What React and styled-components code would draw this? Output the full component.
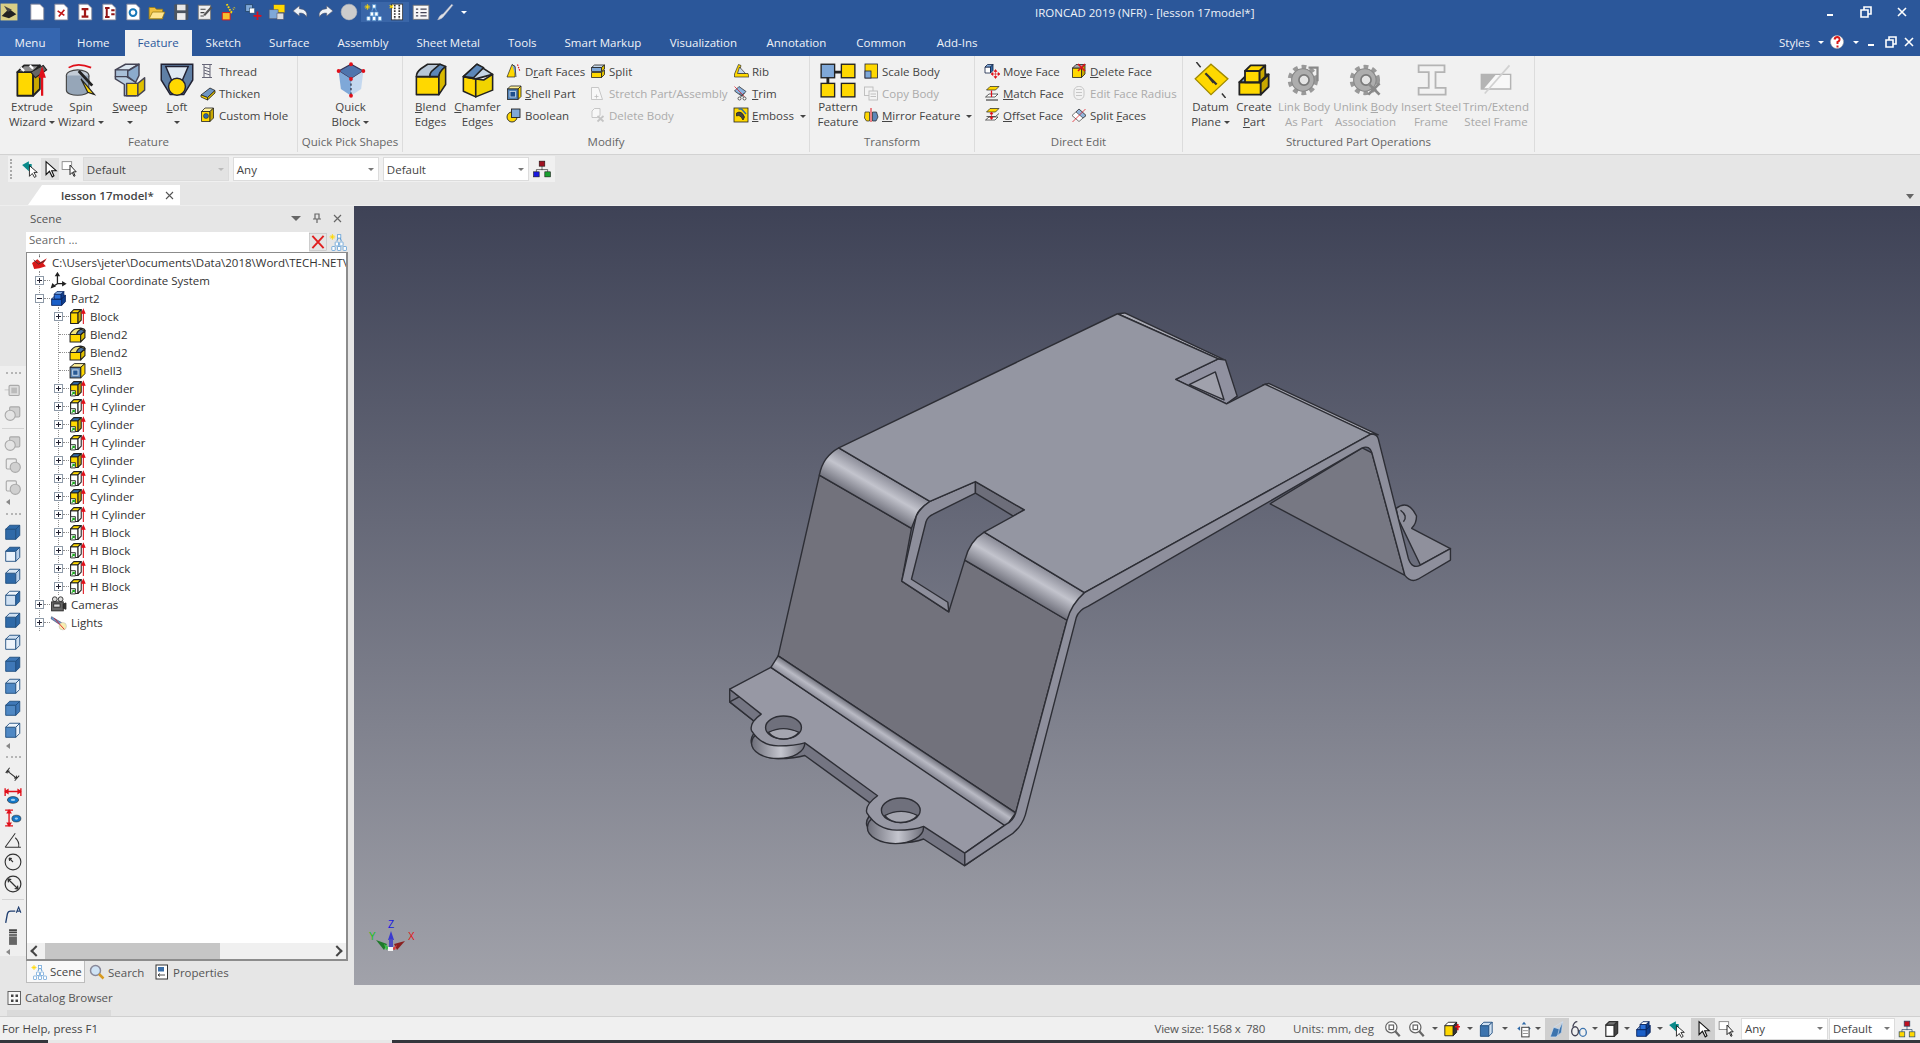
import React from "react";
import styled, { createGlobalStyle } from "styled-components";

const Y = "#ffd800";
const B = "#7fa8d8";
const DB = "#2f6aa8";
const K = "#222";
const R = "#e0101a";

const GlobalStyle = createGlobalStyle`
  html, body { margin: 0; padding: 0; background: #e6e6e6; overflow: hidden; }
  body { font-family: "Open Sans", "Liberation Sans", sans-serif; font-size: 11.5px; color: #444; }
  * { box-sizing: border-box; }
`;

// cube drawn in a 32 unit box
const Cube = ({ x = 4, y = 8, w = 16, h = 18, d = 7, f = Y, t = B, s = "#c9a800", k = K, sw = 1.6 }) => (
  <g stroke={k} strokeWidth={sw} strokeLinejoin="round">
    <path d={`M${x} ${y}h${w}v${h}h-${w}z`} fill={f} />
    <path d={`M${x} ${y}l${d} -${d}h${w}l-${d} ${d}z`} fill={t} />
    <path d={`M${x + w} ${y}l${d} -${d}v${h}l-${d} ${d}z`} fill={s} />
  </g>
);
const Arrow = ({ x = 28 }) => (
  <path d={`M${x} 30V8M${x - 3} 10l3 -7 3 7z`} stroke={R} strokeWidth="2" fill={R} />
);
const Gear = ({ mark }) => (
  <g>
    <circle cx="15" cy="16" r="11" fill="none" stroke="#8a8a8a" strokeWidth="5" strokeDasharray="4 3.2" />
    <circle cx="15" cy="16" r="10" fill="#a2a2a2" stroke="#777" />
    <circle cx="16" cy="16" r="4.5" fill="#e4e4e4" stroke="#666" strokeWidth="1.5" />
    {mark}
  </g>
);
const Feat = ({ top = Y, f = Y, s = "#c9a800", green }) => (
  <g>
    <Cube x={3} y={9} w={14} h={20} d={6} f={f} t={top} s={s} sw={2} />
    {green && <path d="M3 20h9v10H3z" fill="#fff" stroke={K} strokeWidth="1.6" />}
    {green && <path d="M5 28l5 -5M6 23h4v4" stroke="#18a818" strokeWidth="2" fill="none" />}
    <Arrow x={27} />
  </g>
);
const Ghost = ({ flip }) => (
  <g fill="#d0d0d0" stroke="#aaa" strokeWidth="2">
    <rect x={flip ? 4 : 10} y="5" width="18" height="18" rx="2" fill={flip ? "#eee" : "#d0d0d0"} />
    <circle cx={flip ? 20 : 11} cy="20" r="9" fill={flip ? "#d0d0d0" : "#e4e4e4"} />
  </g>
);
const BlueBox = ({ f = DB, t = B, s = "#4f86c0" }) => (
  <Cube x={3} y={11} w={18} h={18} d={7} f={f} t={t} s={s} k="#204f80" />
);
const BlueShell = () => (
  <g stroke={K} strokeWidth="1.6">
    <path d="M3 8l6-6h21l-6 6z" fill="#fff199" />
    <path d="M24 8l6-6v21l-6 6z" fill={Y} />
    <rect x="3" y="8" width="21" height="21" fill="#4f80b5" />
    <rect x="8" y="13" width="11" height="11" fill="#1e4f8c" stroke="#cde" />
  </g>
);
const Sheet = ({ children }) => (
  <g>
    <path d="M5 2h16l7 7v21H5z" fill="#fff" stroke="#889" strokeWidth="1.5" />
    {children}
  </g>
);

const glyphs = {
  extrude: (
    <g>
      <Cube x={3} y={9} w={14} h={21} d={6} t="#8e8e8e" />
      <path d="M6 5l3 3M14 3l3 3" stroke="#fff" strokeWidth="2" />
      <path d="M15 9L26 3l3 4-10 7z" fill="#666" stroke={K} />
      <path d="M25 30V12M23 13l2 -6 2 6z" stroke={R} strokeWidth="2" fill={R} />
    </g>
  ),
  spin: (
    <g>
      <ellipse cx="13" cy="12" rx="10" ry="5" fill="#c3ccd6" stroke="#444" />
      <path d="M3 12v13c0 6 20 6 20 0V12" fill="#96a6b8" stroke="#444" />
      <path d="M16 15l12 14-6-2z" fill={Y} stroke={K} />
      <path d="M14 8l12 13" stroke={K} strokeWidth="2.5" />
      <path d="M5 5q8 -5 20 0" stroke={R} strokeWidth="1.5" fill="none" />
    </g>
  ),
  sweep: (
    <g stroke="#445" strokeWidth="1.3" strokeLinejoin="round">
      <path d="M3 7l9 -5h12l-10 6z" fill="#dbe6f0" />
      <path d="M3 7h11v6H3z" fill="#a9c0d8" />
      <path d="M3 13h10l8 5v12H11V20L3 15z" fill="#b9cde0" />
      <path d="M14 8l10 -6v10l-3 6-7-5z" fill="#8cabcc" />
      <path d="M13 19h10v11H13z" fill={Y} />
      <path d="M23 19l6 -5v11l-6 5z" fill="#e0c000" />
    </g>
  ),
  loft: (
    <g stroke="#223" strokeWidth="1.3">
      <path d="M2 2h28v14l-8 13H10L2 16z" fill="#5f7fa5" />
      <path d="M6 4h20l-6 14h-8z" fill="#dfe9f3" />
      <circle cx="16" cy="22" r="7.5" fill={Y} />
    </g>
  ),
  quick: (
    <g>
      <path d="M5 8l11 -6 11 6-11 7z" fill="#4f74ad" stroke="#335" />
      <path d="M5 8l11 7v15L7 24z" fill={B} />
      <path d="M27 8L16 15v15l9-6z" fill="#c4d8ef" />
      <path d="M16 15v15" stroke="#223" strokeDasharray="2 2" />
      {[[5, 8], [16, 2], [27, 8], [16, 15], [16, 30]].map(([x, y]) => (
        <circle key={x + "" + y} cx={x} cy={y} r="1.7" fill={R} />
      ))}
    </g>
  ),
  blend: (
    <g stroke={K} strokeWidth="1.4" strokeLinejoin="round">
      <path d="M3 13v16h20V13z" fill={Y} />
      <path d="M3 13q0-4 4-7l6-4h11l-5 5q-4 2-4 6z" fill="#b7c6d6" />
      <path d="M15 13h8q0-4 6-9l-5-2-6 5q-3 2-3 6z" fill="#5c87b8" />
      <path d="M23 13q0-4 6-9v16l-6 9z" fill="#d9b900" />
    </g>
  ),
  chamfer: (
    <g stroke={K} strokeWidth="1.4" strokeLinejoin="round">
      <path d="M3 13v13l11 5V15z" fill={Y} />
      <path d="M14 15v16l15-6V11l-8 5z" fill="#f1d400" />
      <path d="M3 13L15 2l14 9-15 4z" fill="#c5d5e5" />
      <path d="M3 13L15 2l6 3-9 9z" fill="#5c87b8" />
    </g>
  ),
  pattern: (
    <g stroke={K} strokeWidth="1.2">
      <path d="M11 9h10M7 13v6" strokeWidth="2.5" />
      <rect x="1" y="2" width="12" height="12" fill={B} />
      <rect x="19" y="2" width="12" height="12" fill={Y} />
      <rect x="1" y="19" width="12" height="12" fill={Y} />
      <rect x="19" y="19" width="12" height="12" fill={Y} />
    </g>
  ),
  datum: (
    <g>
      <path d="M16 2L31 15 16 29 2 15z" fill={Y} stroke="#a08a00" strokeWidth="1.2" />
      <path d="M3 0l26 32" stroke="#333" strokeWidth="1.3" strokeDasharray="6 12" />
      <path d="M11 10l10 10" stroke="#333" strokeWidth="2" />
    </g>
  ),
  create: (
    <g>
      <Cube x={3} y={18} w={19} h={11} d={7} />
      <Cube x={8} y={8} w={13} h={10} d={5} t={Y} />
    </g>
  ),
  link: <Gear mark={<path d="M20 5h8v12" stroke="#777" strokeWidth="2" fill="none" />} />,
  unlink: <Gear mark={<path d="M18 19l10 10M28 19L18 29" stroke="#777" strokeWidth="2.5" />} />,
  steel: <path d="M5 3h23v6H20v14h9v6H5v-6h9V9H5z" fill="#f3f3f3" stroke="#aaa" strokeWidth="1.6" />,
  trimsteel: (
    <g>
      <path d="M3 11h26v13H3z" fill="#fafafa" stroke="#aaa" strokeWidth="1.3" />
      <path d="M3 11h13L5 24H3z" fill="#aaa" />
      <path d="M6 28L28 3" stroke="#ccc" strokeWidth="1.5" />
    </g>
  ),
  thread: (
    <g stroke="#667" strokeWidth="2" fill="#cfd9e5">
      <path d="M4 3h20M4 29h20M8 3v26M20 3v26" />
      <path d="M8 8l12 4M8 14l12 4M8 20l12 4" />
    </g>
  ),
  thicken: (
    <g stroke={K} strokeWidth="1.6" strokeLinejoin="round">
      <path d="M2 20L20 6l10 5-15 14z" fill="#6d95c4" />
      <path d="M2 20l13 5v5L2 24z" fill={Y} />
      <path d="M15 25l15-14v5L15 30z" fill="#d9b900" />
    </g>
  ),
  hole: (
    <g>
      <Cube x={3} y={9} w={17} h={20} d={7} t="#fff2a0" />
      <circle cx="12" cy="18" r="5" fill={DB} stroke={K} />
    </g>
  ),
  draft: (
    <g stroke={K} strokeWidth="1.4">
      <path d="M2 28L12 3l6 4v21z" fill={Y} />
      <path d="M12 3l6 4 2 21" fill={B} />
      <path d="M23 3l5 14" stroke={R} strokeWidth="2.4" strokeDasharray="3 2" />
    </g>
  ),
  shell: <BlueShell />,
  boolean: (
    <g stroke={K} strokeWidth="1.8">
      <circle cx="12" cy="20" r="10" fill={Y} />
      <rect x="11" y="4" width="17" height="17" fill={B} />
    </g>
  ),
  split: (
    <g stroke={K} strokeWidth="1.6" strokeLinejoin="round">
      <path d="M3 9l6-5h20l-6 5z" fill="#c8d9ea" />
      <path d="M3 9h20v8H3z" fill={B} />
      <path d="M3 19h20v10H3z" fill={Y} />
      <path d="M23 9l6-5v8l-6 5zM23 19l6-5v9l-6 6z" fill="#e0c000" />
    </g>
  ),
  stretch: (
    <g stroke="#bbb" strokeWidth="1.6" fill="#f7f7f7">
      <path d="M3 29V5h14l8 24z" />
      <path d="M9 23h8M13 19v8" />
    </g>
  ),
  deletebody: (
    <g stroke="#bbb" strokeWidth="1.6" fill="#f7f7f7">
      <path d="M4 8l5-5h11v14l-5 4H4z" />
      <path d="M15 18l12 11M27 18L15 29" strokeWidth="3.5" stroke="#c4c4c4" />
    </g>
  ),
  rib: (
    <g stroke={K} strokeWidth="1.3" strokeLinejoin="round">
      <path d="M3 28V22L11 3l5 2-4 16h18l2 7z" fill={Y} />
      <path d="M9 21l4-13 12 13z" fill="#c7d6e8" />
    </g>
  ),
  trim: (
    <g stroke={K} strokeWidth="1.4">
      <path d="M3 12L12 3l14 10-9 9z" fill="#8cb2dd" />
      <path d="M3 3l20 20" stroke={R} strokeWidth="1.4" />
      <circle cx="13" cy="27" r="3" fill="#fff" />
      <circle cx="23" cy="27" r="3" fill="#fff" />
      <path d="M15 24l8-8M21 24l-8-8" />
    </g>
  ),
  emboss: (
    <g stroke={K} strokeWidth="1.6">
      <rect x="2" y="2" width="28" height="28" fill={Y} />
      <path d="M7 12q10-6 16 8l-3 6q-6-12-13-8z" fill="#444" />
      <path d="M11 4h6l9 10" stroke={DB} strokeWidth="3" fill="none" />
    </g>
  ),
  scale: (
    <g stroke="#223" strokeWidth="1.6">
      <rect x="4" y="2" width="25" height="28" fill={Y} />
      <rect x="4" y="16" width="12" height="14" fill={B} />
    </g>
  ),
  copy: (
    <g stroke="#bbb" strokeWidth="1.8" fill="#f3f3f3">
      <rect x="3" y="4" width="17" height="17" />
      <rect x="12" y="12" width="17" height="18" />
      <path d="M15 18h11M15 23h11" />
    </g>
  ),
  mirror: (
    <g stroke={K} strokeWidth="1.4">
      <path d="M4 10h9v18H7L3 22z" fill={Y} />
      <path d="M19 10h8l3 10-4 8h-7z" fill="#5c87b8" />
      <path d="M16 2v28" stroke={R} strokeWidth="2" />
    </g>
  ),
  move: (
    <g>
      <Cube x={2} y={8} w={11} h={12} d={5} f="#fff" t={B} s={DB} k="#124" />
      <path d="M23 14v16M15 22h16M23 13l-3 4h6zM23 31l-3-4h6zM14 22l4-3v6zM32 22l-4-3v6z" stroke={R} fill={R} strokeWidth="1.2" />
    </g>
  ),
  match: (
    <g stroke={K} strokeWidth="1.4">
      <path d="M5 10L12 3h18l-7 7z" fill={Y} />
      <path d="M3 24l7-6h18l-6 6z" fill="#fff" />
      <path d="M4 30h24" strokeWidth="2" />
      <path d="M15 11v13" stroke={R} strokeWidth="2.5" />
    </g>
  ),
  offset: (
    <g stroke={K} strokeWidth="1.4">
      <path d="M5 10L12 3h18l-7 7z" fill={Y} />
      <path d="M5 19h18l7-6" fill="none" />
      <path d="M3 26l7-6h18l-6 6z" fill="#fff" />
      <path d="M15 11v13M12 14l3-4 3 4zM12 21l3 4 3-4z" stroke={R} fill={R} />
    </g>
  ),
  deleteface: (
    <g>
      <Cube x={3} y={10} w={18} h={19} d={7} t="#a8a8a8" />
      <path d="M14 2l14 14M28 2L14 16" stroke={R} strokeWidth="3" />
    </g>
  ),
  radius: (
    <g stroke="#bbb" strokeWidth="1.6" fill="#f2f2f2">
      <rect x="6" y="3" width="20" height="26" rx="9" />
      <path d="M10 9h12M10 15h12M10 21h12" />
    </g>
  ),
  splitfaces: (
    <g stroke={K} strokeWidth="1.2">
      <path d="M2 17L16 4l14 13-14 12z" fill="#fff" />
      <path d="M10 10l6-6 14 13-6 5z" fill="#93b5dc" />
      <path d="M3 30L29 4" stroke={R} strokeWidth="1.5" />
    </g>
  ),
  logo: (
    <g>
      <rect x="1" y="1" width="30" height="30" fill="#d9cf86" />
      <path d="M3 23l13-13 13 10-13 7z" fill="#222" />
      <path d="M7 5l14 7-7 4z" fill="#444" />
    </g>
  ),
  newdoc: <Sheet />,
  doc1: (
    <Sheet>
      <path d="M10 14l12 8M22 12L12 24" stroke="#c01818" strokeWidth="3" />
    </Sheet>
  ),
  doc2: (
    <Sheet>
      <path d="M10 11h12M10 24h12M16 11v13" stroke="#a01818" strokeWidth="4" />
    </Sheet>
  ),
  doc3: (
    <Sheet>
      <path d="M9 9h8M12 9v16M9 25h8M20 13h6M20 20h6" stroke="#901515" strokeWidth="3.5" />
    </Sheet>
  ),
  doc4: (
    <Sheet>
      <circle cx="16" cy="17" r="6" fill="none" stroke="#1878b8" strokeWidth="3.5" />
    </Sheet>
  ),
  open: (
    <g stroke="#9a7a10" strokeWidth="1.4">
      <path d="M2 8h10l3 3h11v17H2z" fill="#f0c040" />
      <path d="M2 28l6-12h22l-5 12z" fill="#ffe590" />
    </g>
  ),
  save: (
    <g>
      <rect x="4" y="2" width="25" height="28" rx="2" fill="#4c5560" />
      <rect x="9" y="3" width="15" height="10" fill="#e8e8e8" />
      <rect x="9" y="18" width="15" height="12" fill="#eee" />
    </g>
  ),
  edit: (
    <g>
      <rect x="4" y="4" width="22" height="25" fill="#eee" stroke="#777" strokeWidth="1.5" />
      <path d="M8 11h9M8 17h7M8 23h6" stroke="#444" strokeWidth="2" />
      <path d="M13 21l13-15 3 3-13 14z" fill="#555" />
    </g>
  ),
  paste: (
    <g>
      <path d="M4 17h14v13H4z" fill="#f6c030" stroke={R} strokeWidth="1.6" />
      <path d="M12 2l8 14 6-8" stroke={Y} strokeWidth="3.5" fill="none" strokeDasharray="3 2" />
      <path d="M18 8l9 9" stroke="#2f5aa8" strokeWidth="3" />
    </g>
  ),
  addred: (
    <g>
      <rect x="3" y="3" width="12" height="12" fill={B} stroke="#246" strokeWidth="1.4" />
      <rect x="10" y="9" width="9" height="9" fill="#fff" stroke="#246" />
      <path d="M24 15v15M17 23h14" stroke={R} strokeWidth="3" />
    </g>
  ),
  folderblue: (
    <g stroke="#556" strokeWidth="1">
      <rect x="10" y="3" width="20" height="14" fill={Y} />
      <rect x="2" y="12" width="16" height="16" fill={B} />
      <rect x="16" y="18" width="12" height="11" fill="#ddd" />
    </g>
  ),
  undo: <path d="M13 5L2 14l11 9v-5q9-1 13 7 3-14-13-15z" fill="#eef2f7" stroke="#556" />,
  redo: <path d="M19 5l11 9-11 9v-5q-9-1-13 7-3-14 13-15z" fill="#eef2f7" stroke="#556" />,
  sphere: <circle cx="16" cy="16" r="14" fill="#ccc" stroke="#bbb" />,
  sparkTree: (
    <g>
      <path d="M6 2v10M1 7h10M3 4l6 6M9 4l-6 6" stroke={Y} strokeWidth="1.6" />
      <path d="M18 5l-4 9M18 5l4 9" stroke="#5b9bd5" strokeWidth="2" />
      {[[14, 19], [22, 19], [8, 27], [18, 27], [28, 27]].map(([x, y]) => (
        <rect key={x + "" + y} x={x - 3} y={y - 3} width="6" height="7" rx="1" fill="#fff" stroke="#5b9bd5" strokeWidth="1.4" />
      ))}
      <rect x="15" y="3" width="6" height="6" fill="#fff" stroke="#5b9bd5" strokeWidth="1.4" />
    </g>
  ),
  film: (
    <g>
      <rect x="6" y="2" width="20" height="28" fill="#fff" stroke="#333" strokeWidth="1.4" />
      <path d="M12 3v26M20 3v26" stroke="#333" strokeDasharray="3 2" strokeWidth="3" />
      <path d="M3 4l6 5M9 4l-6 5" stroke={Y} strokeWidth="2" />
    </g>
  ),
  listing: (
    <g fill="none">
      <rect x="2" y="4" width="28" height="25" fill="#f8f8f8" stroke="#777" strokeWidth="1.5" />
      <path d="M7 11h4M15 11h11M7 17h4M15 17h11M7 23h4M15 23h11" stroke="#445" strokeWidth="2.4" />
    </g>
  ),
  brush: <path d="M3 30q3-9 10-11L28 2l2 2-15 18q-3 6-12 8z" fill="#dfe3e8" stroke="#aab" />,
  cursorA: (
    <g>
      <path d="M2 9l12-7v5h5v8h-5v5z" fill="#0a8a8a" />
      <path d="M15 10v19l5-5 4 7 3-2-4-7h6z" fill="#fff" stroke="#111" strokeWidth="1.5" />
    </g>
  ),
  cursor: <path d="M9 3v23l6-6 5 10 3-2-4-9h8z" fill="#fff" stroke="#111" strokeWidth="2" />,
  cursorBox: (
    <g>
      <rect x="2" y="3" width="17" height="14" fill="#fff" stroke="#777" strokeWidth="1.4" />
      <path d="M16 9v17l4-4 3 7 2-1-3-7h5z" fill="#fff" stroke="#111" strokeWidth="1.6" />
    </g>
  ),
  hier: (
    <g stroke="#111" strokeWidth="1">
      <path d="M16 10v8M6 21v-4h20v4" fill="none" />
      <rect x="11" y="2" width="10" height="9" fill="#a01020" />
      <rect x="1" y="21" width="10" height="9" fill="#1818e0" />
      <rect x="21" y="21" width="10" height="9" fill="#18a030" />
    </g>
  ),
  hierY: (
    <g stroke="#246" strokeWidth="1.2">
      <path d="M16 10v8M7 21v-4h18v4" fill="none" />
      <rect x="11" y="2" width="10" height="9" fill="#c01020" />
      <rect x="2" y="21" width="10" height="9" fill={Y} />
      <rect x="20" y="21" width="10" height="9" fill={Y} />
    </g>
  ),
  redX: (
    <g>
      <rect x="1" y="1" width="30" height="30" fill="#e4e4e4" stroke="#bbb" />
      <path d="M6 5l20 22M26 5L6 27" stroke="#e02020" strokeWidth="3.4" />
    </g>
  ),
  root: (
    <g>
      <path d="M2 17l10-7 6 5 12-7-7 10 5 5-12 4L6 28z" fill="#d81818" />
      <path d="M5 11l9 8M27 12l-13 7" stroke="#333" strokeWidth="1.5" />
      <path d="M16 1v5" stroke="#222" strokeDasharray="2 1" strokeWidth="1.5" />
    </g>
  ),
  axes: <path d="M14 2v20M14 22L3 29M14 22h15M14 2l-3 5h6zM3 29l2-6 4 4zM29 22l-5-3v6z" stroke="#222" strokeWidth="2.4" fill="#222" />,
  part: (
    <g>
      <Cube x={3} y={17} w={19} h={12} d={7} f="#1a5fc8" t="#8ab6ee" s="#0e3f90" k="#0a2460" />
      <Cube x={8} y={8} w={13} h={9} d={5} f="#2a6fd8" t="#8ab6ee" s="#0e3f90" k="#0a2460" />
    </g>
  ),
  tblock: <Feat />,
  tcyl: <Feat top={DB} green />,
  thcyl: <Feat f="#fff" s="#fff" green />,
  tblend: (
    <g stroke={K} strokeWidth="2" strokeLinejoin="round">
      <path d="M2 16v14h20V16z" fill={Y} />
      <path d="M22 16l8-7v13l-8 8z" fill="#e0c000" />
      <path d="M2 16q2-7 10-11l10-1q8 1 8 5l-8 7z" fill="#f0e47a" />
      <path d="M14 16q1-6 8-10l8 3-8 7z" fill="#4c76a8" />
    </g>
  ),
  tshell: (
    <g stroke={K} strokeWidth="1.8">
      <path d="M2 10l8-7h20l-8 7z" fill="#fff199" />
      <path d="M22 10l8-7v19l-8 8z" fill={Y} />
      <rect x="2" y="10" width="20" height="20" fill="#5f87b5" />
      <rect x="7" y="15" width="10" height="10" fill="#2a5a95" stroke="#cde" />
    </g>
  ),
  camera: (
    <g stroke="#222" strokeWidth="1.6">
      <circle cx="9" cy="6" r="4.5" fill="#ddd" />
      <circle cx="20" cy="6" r="4.5" fill="#ddd" />
      <rect x="3" y="11" width="22" height="17" fill="#666" />
      <rect x="7" y="15" width="12" height="6" fill="#ddd" />
      <path d="M25 15l5-2v12l-5-2z" fill="#333" />
    </g>
  ),
  light: (
    <g>
      <path d="M3 5l20 12-3 4L2 9z" fill="#6b9bd0" stroke="#335" />
      <circle cx="24" cy="23" r="7" fill="#f6eeb0" stroke="#bbb" />
      <path d="M8 8l19 21" stroke={R} strokeWidth="1.6" />
    </g>
  ),
  magnify: (
    <g>
      <circle cx="13" cy="13" r="10" fill="#cfe3f5" stroke="#889" strokeWidth="3" />
      <path d="M20 20l9 9" stroke="#d89a20" strokeWidth="5" />
    </g>
  ),
  props: (
    <g>
      <rect x="4" y="2" width="23" height="28" fill="#fff" stroke="#333" strokeWidth="2" />
      <rect x="8" y="6" width="12" height="9" fill="#3a6ea8" />
      <path d="M8 22h14M12 19l-4 3 4 3" stroke="#222" strokeWidth="1.6" fill="none" />
    </g>
  ),
  catalog: (
    <g>
      <rect x="2" y="3" width="25" height="26" fill="#f8f8f8" stroke="#555" strokeWidth="1.8" />
      <rect x="8" y="9" width="5" height="5" fill="#444" />
      <rect x="17" y="9" width="5" height="5" fill="#444" />
      <rect x="8" y="19" width="5" height="5" fill="#444" />
      <rect x="17" y="19" width="5" height="5" fill="#444" />
    </g>
  ),
  ghostA: (
    <g>
      <path d="M1 14h8" stroke="#ccc" strokeWidth="2" />
      <rect x="9" y="6" width="18" height="18" rx="2" fill="#ddd" stroke="#aaa" strokeWidth="2" />
      <rect x="13" y="10" width="10" height="10" fill="#bbb" />
    </g>
  ),
  ghostB: <Ghost />,
  ghostC: <Ghost flip />,
  cubeA: <BlueBox f={DB} t={DB} s={DB} />,
  cubeB: <BlueBox f="#eaf2fb" t={DB} s="#b8d0ea" />,
  cubeC: <BlueBox f={DB} t="#d8e6f4" s="#b8d0ea" />,
  cubeD: <BlueBox f="#cfe0f2" t="#eef4fb" s={DB} />,
  cubeE: <BlueBox f={DB} t="#cfe0f2" s={DB} />,
  cubeF: <BlueBox f="#eef4fb" t="#cfe0f2" s="#cfe0f2" />,
  solidA: <BlueBox f="#3f78b8" t="#3f78b8" s="#2a5f9c" />,
  solidB: <BlueBox f="#4f88c4" t="#cfe0f2" s="#eef4fb" />,
  solidC: <BlueBox f="#4f88c4" t="#3f78b8" s="#3f78b8" />,
  solidD: <BlueBox f="#4f88c4" t="#eef4fb" s="#eef4fb" />,
  dimLine: <path d="M5 10l18 14M3 14l7-9M19 28l8-9M5 10l5 1M5 10l1 5M23 24l-5-1M23 24l-1-5" stroke="#333" strokeWidth="1.8" fill="none" />,
  dimH: (
    <g>
      <path d="M2 2v14M30 2v14M2 8h28M2 8l5-3v6zM30 8l-5-3v6z" stroke={R} strokeWidth="2.4" fill={R} />
      <ellipse cx="16" cy="23" rx="10" ry="6" fill="#1478c8" stroke="#222" />
      <ellipse cx="16" cy="23" rx="4" ry="2" fill="#9fd0f0" />
    </g>
  ),
  dimV: (
    <g>
      <path d="M2 2h14M2 30h14M9 2v28M9 2l-3 5h6zM9 30l-3-5h6z" stroke={R} strokeWidth="2.4" fill={R} />
      <ellipse cx="22" cy="17" rx="8" ry="6" fill="#1478c8" stroke="#222" />
      <ellipse cx="22" cy="17" rx="3" ry="2" fill="#9fd0f0" />
    </g>
  ),
  angle: <path d="M2 29h28M2 29L20 4M20 12q8 7 6 17" stroke="#333" strokeWidth="1.8" fill="none" />,
  radiusDim: (
    <g stroke="#333" strokeWidth="2" fill="none">
      <circle cx="16" cy="16" r="14" />
      <path d="M16 16L9 9M9 9l1 5M9 9l5 1" />
    </g>
  ),
  diaDim: (
    <g stroke="#333" strokeWidth="2.2" fill="none">
      <circle cx="16" cy="16" r="14" />
      <path d="M7 7l18 18M7 7l1 6M7 7l6 1M25 25l-1-6M25 25l-6-1" />
    </g>
  ),
  textA: (
    <g>
      <path d="M3 30l3-16q1-5 6-5h8" stroke="#203f70" strokeWidth="2.4" fill="none" />
      <path d="M22 12l4-10 4 10M24 9h4" stroke="#203f70" strokeWidth="2" fill="none" />
    </g>
  ),
  cylGrad: (
    <g>
      <path d="M9 2h14v4H9zM9 7h14v2H9zM9 10h14v2H9zM9 13h14v1H9z" fill="#444" />
      <rect x="9" y="15" width="14" height="15" fill="#666" />
    </g>
  ),
  zoomA: (
    <g stroke="#666" strokeWidth="2.2" fill="#fff">
      <circle cx="13" cy="13" r="10" />
      <rect x="9" y="9" width="8" height="8" />
      <path d="M20 20l8 9" strokeWidth="4" />
    </g>
  ),
  stYellow: (
    <g>
      <Cube x={5} y={10} w={15} h={18} d={6} t="#fff" s="#333" />
      <path d="M28 7v11M23 12h11" stroke={R} strokeWidth="3" />
    </g>
  ),
  stBlue: <Cube x={6} y={10} w={15} h={19} d={6} f="#3d74ae" t="#cfe0f2" s="#cfe0f2" k="#204f80" />,
  stMove: (
    <g>
      <path d="M16 3l-4 5h8zM4 15l5-4v8zM28 15l-5-4v8z" fill="#2f6aa8" />
      <rect x="12" y="13" width="13" height="17" fill="#fff" stroke="#444" strokeWidth="1.8" />
      <path d="M14 19h9M14 24h9" stroke="#444" />
    </g>
  ),
  stEdge: <path d="M4 30l6-17L26 3l-2 19-10 8zM10 13l10 3 6-13M20 16l-3 12" fill="#3d74ae" stroke="#cfe0f2" strokeWidth="1.2" />,
  glasses: (
    <g fill="none" stroke="#445" strokeWidth="2.4">
      <ellipse cx="9" cy="20" rx="6" ry="8" />
      <ellipse cx="23" cy="22" rx="6" ry="7" stroke="#3d74ae" />
      <path d="M5 12q2-9 8-9M14 19h3" />
    </g>
  ),
  stCube: <Cube x={5} y={9} w={15} h={20} d={6} f="#fff" t="#777" s="#444" k="#333" sw={2.2} />,
  stPart: (
    <g>
      <Cube x={3} y={17} w={17} h={12} d={7} f="#1a5fc8" t="#8ab6ee" s="#0e3f90" k="#0a2460" />
      <Cube x={9} y={8} w={11} h={9} d={5} f="#2a6fd8" t="#fff" s="#0e3f90" k="#0a2460" />
    </g>
  ),
  help: (
    <g>
      <circle cx="16" cy="16" r="13" fill="#fff" stroke="#aaa" strokeWidth="2" strokeDasharray="3 2" />
      <path d="M11 11q1-5 6-5 5 1 4 6-1 3-4 4v4M17 23v4" stroke="#d81818" strokeWidth="4" fill="none" />
    </g>
  ),
};

const IconSvg = styled.svg`
  flex: none;
  display: block;
`;
const Icon = ({ name, size = 16 }) => (
  <IconSvg width={size} height={size} viewBox="0 0 32 32">
    {glyphs[name]}
  </IconSvg>
);

const Page = styled.div`
  width: 1920px;
  height: 1043px;
  display: flex;
  flex-direction: column;
  overflow: hidden;
  background: #e6e6e6;
`;
const TitleBar = styled.div`
  height: 28px;
  flex: none;
  background: #2b579a;
  display: flex;
  align-items: center;
  padding: 0 0 4px 0;
  color: #eef2f8;
`;
const Qat = styled.div`
  display: flex;
  align-items: center;
  width: 1035px;
`;
const QatSlot = styled.div`
  width: ${(p) => p.$w || 24}px;
  height: 20px;
  display: flex;
  align-items: center;
  justify-content: center;
  margin-left: ${(p) => p.$ml || 0}px;
  background: ${(p) => (p.$on ? "#3a66a8" : "transparent")};
`;
const Title = styled.div`
  font-size: 11.5px;
`;
const WinButtons = styled.div`
  margin-left: auto;
  display: flex;
  align-items: center;
  gap: 24px;
  padding-right: 12px;
`;
const WinGlyph = styled.svg`
  display: block;
  flex: none;
  width: 12px;
  height: 12px;
  margin-left: ${(p) => p.$ml || 0}px;
`;
const TabBar = styled.div`
  height: 28px;
  flex: none;
  background: #2b579a;
  display: flex;
  align-items: flex-end;
  color: #f0f3f8;
`;
const MenuTab = styled.div`
  width: 60px;
  height: 28px;
  background: #3566b0;
  display: flex;
  align-items: center;
  justify-content: center;
  margin-right: 2px;
`;
const Tab = styled.div`
  height: 26px;
  padding: 0 ${(p) => p.$pad || 14}px 2px;
  display: flex;
  align-items: center;
  background: ${(p) => (p.$active ? "#f1f1f1" : "transparent")};
  color: ${(p) => (p.$active ? "#2b579a" : "inherit")};
`;
const TabRight = styled.div`
  margin-left: auto;
  height: 28px;
  display: flex;
  align-items: center;
  padding-right: 5px;
`;
const HelpSlot = styled.div`
  margin-left: 5px;
`;
const Caret = styled.span`
  display: inline-block;
  flex: none;
  width: 0;
  height: 0;
  border-left: ${(p) => p.$s || 3}px solid transparent;
  border-right: ${(p) => p.$s || 3}px solid transparent;
  border-top: ${(p) => p.$s || 3}px solid ${(p) => p.$c || "#444"};
  margin-left: ${(p) => p.$ml ?? 3}px;
  vertical-align: middle;
`;
const Ribbon = styled.div`
  height: 99px;
  flex: none;
  background: #f1f1f1;
  border-bottom: 1px solid #d2d2d2;
  display: flex;
`;
const Group = styled.div`
  width: ${(p) => p.$w}px;
  height: 96px;
  flex: none;
  padding-top: 4px;
  display: flex;
  flex-direction: column;
  border-right: 1px solid #dcdcdc;
`;
const GroupBody = styled.div`
  height: 74px;
  display: flex;
  padding-left: ${(p) => p.$pl || 0}px;
`;
const GroupLabel = styled.div`
  text-align: center;
  line-height: 15px;
  color: #666;
`;
const Large = styled.div`
  width: ${(p) => p.$w}px;
  flex: none;
  display: flex;
  flex-direction: column;
  align-items: center;
  text-align: center;
  line-height: 15px;
  padding-top: 2px;
  white-space: nowrap;
  color: ${(p) => (p.$off ? "#a8a8a8" : "#444")};
  svg {
    margin-bottom: 1px;
    opacity: ${(p) => (p.$off ? 0.85 : 1)};
  }
`;
const SmallCol = styled.div`
  width: ${(p) => (p.$w ? `${p.$w}px` : "auto")};
  margin-left: ${(p) => p.$ml || 0}px;
  flex: none;
  display: flex;
  flex-direction: column;
`;
const SmallRow = styled.div`
  height: 22px;
  display: flex;
  align-items: center;
  gap: 3px;
  white-space: nowrap;
  color: ${(p) => (p.$off ? "#ababab" : "#444")};
`;
const Key = styled.span`
  text-decoration: underline;
`;
const ToolRow = styled.div`
  height: 30px;
  flex: none;
  padding: 1px 0 0 8px;
  display: flex;
`;
const ToolBar = styled.div`
  width: 547px;
  height: 26px;
  background: #f0f0f0;
  display: flex;
  align-items: center;
`;
const Grip = styled.div`
  width: 2px;
  height: 20px;
  margin: 0 8px 0 2px;
  border-left: 2px dotted #aaa;
`;
const ToolSlot = styled.div`
  width: ${(p) => p.$w || 22}px;
  height: 22px;
  display: flex;
  align-items: center;
  justify-content: center;
  background: ${(p) => (p.$on ? "#e0e0e0" : "transparent")};
`;
const Combo = styled.div`
  width: ${(p) => p.$w}px;
  height: ${(p) => p.$h || 24}px;
  margin-left: ${(p) => p.$ml || 0}px;
  flex: none;
  background: ${(p) => (p.$off ? "#e3e3e3" : "#fff")};
  border: 1px solid #dcdcdc;
  display: flex;
  align-items: center;
  justify-content: space-between;
  padding: 0 4px 0 3px;
`;
const DocStrip = styled.div`
  height: 21px;
  flex: none;
  display: flex;
  align-items: flex-end;
  justify-content: space-between;
  padding: 0 6px 0 28px;
  border-bottom: 1px solid #eee;
`;
const DocTab = styled.div`
  width: 152px;
  height: 20px;
  background: #fff;
  clip-path: polygon(14px 0, 100% 0, 100% 100%, 0 100%);
  display: flex;
  align-items: center;
  padding-left: 33px;
  gap: 11px;
  font-weight: 600;
  color: #444;
`;
const Chevron = styled.div`
  width: 0;
  height: 0;
  margin-bottom: 6px;
  border-left: 4px solid transparent;
  border-right: 4px solid transparent;
  border-top: 5px solid #666;
`;
const Main = styled.div`
  height: 779px;
  flex: none;
  display: flex;
`;
const LeftBar = styled.div`
  width: 26px;
  flex: none;
  padding-top: 160px;
  display: flex;
  flex-direction: column;
  align-items: center;
`;
const LeftItem = styled.div`
  width: 26px;
  height: 22px;
  background: #efefef;
  display: flex;
  align-items: center;
  justify-content: center;
`;
const LeftGap = styled.div`
  width: 26px;
  height: ${(p) => p.$h}px;
  background: #efefef;
  display: flex;
  align-items: center;
  justify-content: ${(p) => (p.$left ? "flex-start" : "center")};
  padding-left: ${(p) => (p.$left ? 6 : 0)}px;
  &::after {
    content: "";
    ${(p) => p.$kind === "grip" && "width: 15px; border-top: 2px dotted #b5b5b5;"}
    ${(p) => p.$kind === "line" && "width: 22px; border-top: 1px solid #d4d4d4;"}
    ${(p) =>
      p.$kind === "arrow" &&
      "border-top: 3px solid transparent; border-bottom: 3px solid transparent; border-right: 4px solid #888;"}
  }
`;
const Scene = styled.div`
  width: 322px;
  flex: none;
  display: flex;
  flex-direction: column;
`;
const SceneHead = styled.div`
  height: 26px;
  flex: none;
  display: flex;
  align-items: center;
  padding: 0 6px 2px 4px;
  color: #555;
`;
const SceneHeadTools = styled.div`
  margin-left: auto;
  display: flex;
  align-items: center;
  gap: 11px;
`;
const SearchRow = styled.div`
  height: 20px;
  flex: none;
  background: #fff;
  display: flex;
  align-items: center;
  padding-left: 3px;
  color: #666;
`;
const SearchText = styled.span`
  margin-bottom: 6px;
`;
const SearchTools = styled.div`
  margin-left: auto;
  display: flex;
  align-items: center;
  gap: 2px;
  padding-right: 1px;
  height: 20px;
  background: #e6e6e6;
`;
const TreeBox = styled.div`
  height: 709px;
  flex: none;
  background: #fff;
  border: 1px solid #8c8c8c;
  border-right-width: 2px;
  border-bottom-width: 2px;
  display: flex;
  flex-direction: column;
`;
const TreeBody = styled.div`
  flex: 1;
  overflow: hidden;
`;
const TreeRow = styled.div`
  height: 18px;
  display: flex;
  align-items: center;
  white-space: nowrap;
  color: #333;
  margin-left: ${(p) => p.$ml || 0}px;
`;
const Branch = styled.div`
  margin-left: ${(p) => p.$ml}px;
  border-left: 1px dotted #8f8f8f;
`;
const Expander = styled.div`
  width: 9px;
  height: 9px;
  flex: none;
  background: #fff;
  border: 1px solid #8e9aa8;
  position: relative;
  &::before {
    content: "";
    position: absolute;
    left: 1px;
    right: 1px;
    top: 3px;
    border-top: 1px solid #223;
  }
  &::after {
    content: "";
    display: ${(p) => (p.$open ? "none" : "block")};
    position: absolute;
    top: 1px;
    bottom: 1px;
    left: 3px;
    border-left: 1px solid #223;
  }
`;
const Dash = styled.div`
  width: ${(p) => p.$w}px;
  flex: none;
  border-top: 1px dotted #8f8f8f;
`;
const TreeText = styled.span`
  margin-left: 4px;
`;
const HScroll = styled.div`
  height: 16px;
  flex: none;
  background: #f0f0f0;
  display: flex;
  align-items: center;
`;
const ScrollBtn = styled.div`
  width: 18px;
  height: 16px;
  display: flex;
  align-items: center;
  justify-content: center;
  &::after {
    content: "";
    width: 6px;
    height: 6px;
    border-left: 2px solid #444;
    border-bottom: 2px solid #444;
    transform: ${(p) => (p.$right ? "rotate(225deg)" : "rotate(45deg)")};
  }
`;
const ScrollThumb = styled.div`
  width: 175px;
  height: 16px;
  background: #c6c6c6;
`;
const ScrollTrack = styled.div`
  flex: 1;
`;
const SceneTabs = styled.div`
  height: 24px;
  flex: none;
  display: flex;
  align-items: flex-start;
  color: #555;
`;
const SceneTab = styled.div`
  height: 22px;
  width: ${(p) => p.$w}px;
  display: flex;
  align-items: center;
  gap: 3px;
  padding-left: 4px;
  flex: none;
  ${(p) =>
    p.$active && "background: #f8f8f8; border: 1px solid #bdbdbd; border-top: none; color: #444;"}
`;
const Viewport = styled.div`
  flex: 1;
  margin-left: 6px;
  height: 779px;
  background: linear-gradient(180deg, #3e4256 0%, #a1a2aa 100%);
`;
const CatalogRow = styled.div`
  height: 31px;
  flex: none;
  display: flex;
  flex-direction: column;
  padding: 3px 0 0 7px;
  color: #555;
`;
const CatalogTab = styled.div`
  height: 19px;
  display: flex;
  align-items: center;
  gap: 2px;
`;
const CatalogLine = styled.div`
  width: 104px;
  height: 6px;
  margin-top: 3px;
  background: #dadada;
`;
const Status = styled.div`
  height: 24px;
  flex: none;
  background: #f0f0f0;
  border-top: 1px solid #d0d0d0;
  display: flex;
  align-items: center;
  padding: 0 1px 0 2px;
  color: #444;
`;
const StatusInfo = styled.span`
  margin-left: ${(p) => p.$ml};
  letter-spacing: ${(p) => p.$ls || 0}px;
  white-space: pre;
  color: #555;
`;
const StatusIcons = styled.div`
  display: flex;
  align-items: center;
  margin-left: 7px;
`;
const StatusSlot = styled.div`
  width: ${(p) => p.$w}px;
  height: 22px;
  flex: none;
  display: flex;
  align-items: center;
  justify-content: center;
  background: ${(p) => (p.$on ? "#cfcfcf" : "transparent")};
`;
const Edge = styled.div`
  flex: 1;
  display: flex;
  background: #34363c;
`;
const EdgeLight = styled.div`
  width: 344px;
  margin-left: 48px;
  background: #e8e8e8;
`;
const ViewSvg = styled.svg`
  display: block;
`;

const qat = ["newdoc", "doc1", "doc2", "doc3", "doc4", "open", "save", "edit", "paste", "addred", "folderblue", "undo", "redo", "sphere", "sparkTree", "film", "listing", "brush"];
const tabs = [["Home", 15], ["Feature", 13], ["Sketch"], ["Surface"], ["Assembly"], ["Sheet Metal"], ["Tools"], ["Smart Markup"], ["Visualization", 14.5], ["Annotation", 15], ["Common", 15], ["Add-Ins", 16]];

const LargeBtn = ({ w, icon, off, lines }) => (
  <Large $w={w} $off={off}>
    <Icon name={icon} size={36} />
    {lines.map((l, i) => (
      <div key={i}>{l}</div>
    ))}
  </Large>
);
const Small = ({ icon, off, children }) => (
  <SmallRow $off={off}>
    <Icon name={icon} />
    <span>{children}</span>
  </SmallRow>
);

const leftBar = [
  ["g", "grip", 14], ["i", "ghostA"], ["i", "ghostB"], ["g", "line", 8], ["i", "ghostB"], ["i", "ghostC"], ["i", "ghostC"],
  ["g", "arrow", 8], ["g", "grip", 15],
  ["i", "cubeA"], ["i", "cubeB"], ["i", "cubeC"], ["i", "cubeD"], ["i", "cubeE"], ["i", "cubeF"],
  ["i", "solidA"], ["i", "solidB"], ["i", "solidC"], ["i", "solidD"], ["g", "arrow", 10], ["g", "grip", 12],
  ["i", "dimLine"], ["i", "dimH"], ["i", "dimV"], ["i", "angle"], ["i", "radiusDim"], ["i", "diaDim"],
  ["g", "line", 9], ["i", "textA"], ["i", "cylGrad"], ["g", "arrow", 8],
];

const features = [
  ["tblock", "Block", true], ["tblend", "Blend2"], ["tblend", "Blend2"], ["tshell", "Shell3"],
  ["tcyl", "Cylinder", true], ["thcyl", "H Cylinder", true], ["tcyl", "Cylinder", true], ["thcyl", "H Cylinder", true],
  ["tcyl", "Cylinder", true], ["thcyl", "H Cylinder", true], ["tcyl", "Cylinder", true], ["thcyl", "H Cylinder", true],
  ["thcyl", "H Block", true], ["thcyl", "H Block", true], ["thcyl", "H Block", true], ["thcyl", "H Block", true],
];

const NodeRow = ({ icon, text, open, leaf }) => (
  <TreeRow $ml={leaf ? 0 : -5}>
    {leaf ? <Dash $w={10} /> : <Expander $open={open} />}
    {!leaf && <Dash $w={6} />}
    <Icon name={icon} size={17} />
    <TreeText>{text}</TreeText>
  </TreeRow>
);

// widths picked so each icon lands over its spot in the status bar
const statusItems = [
  ["i", "zoomA", 24], ["i", "zoomA", 24], ["c", "", 12], ["i", "stYellow", 20], ["c", "", 18], ["i", "stBlue", 14], ["c", "", 24], ["i", "stMove", 14], ["c", "", 14],
  ["on", "stEdge", 24], ["i", "glasses", 20], ["c", "", 12], ["i", "stCube", 22], ["c", "", 8], ["i", "stPart", 26], ["c", "", 6], ["i", "cursorA", 28], ["on", "cursor", 24], ["i", "cursorBox", 24],
];

const Bracket = () => (
  <ViewSvg width="1566" height="779" viewBox="354 206 1566 779">
    <defs>
      <linearGradient id="bandA" gradientUnits="userSpaceOnUse" x1="245" y1="412" x2="197" y2="477">
        <stop offset="0" stopColor="#8a8b97" />
        <stop offset="0.45" stopColor="#c3c4cd" />
        <stop offset="1" stopColor="#72737e" />
      </linearGradient>
      <linearGradient id="bandB" gradientUnits="userSpaceOnUse" x1="120" y1="955" x2="99" y2="980">
        <stop offset="0" stopColor="#72737e" />
        <stop offset="0.5" stopColor="#b9bac4" />
        <stop offset="1" stopColor="#8d8e9a" />
      </linearGradient>
      <linearGradient id="tabSide" x1="0" x2="1" y1="0" y2="0">
        <stop offset="0" stopColor="#6d6e79" />
        <stop offset="0.55" stopColor="#c4c5ce" />
        <stop offset="1" stopColor="#6d6e79" />
      </linearGradient>
    </defs>
    {/* points read straight off the picture, hence the odd scale */}
    <g transform="translate(720 290) scale(0.4847 0.3831)" stroke="#2d2e35" strokeWidth="1.4" strokeLinejoin="round">
      <path vectorEffect="non-scaling-stroke" d="M1395 570Q1420 545 1437 590Q1437 610 1427 622L1507 675L1445 718L1400 600Z" fill="#8f909c" />
      <path vectorEffect="non-scaling-stroke" d="M1404 575Q1420 590 1410 605" fill="none" />
      <path vectorEffect="non-scaling-stroke" d="M1135 558L1325 412L1345 425L1413 745Z" fill="#777883" />
      <path vectorEffect="non-scaling-stroke" d="M820 62L835 60L1042 183L1028 180Z" fill="#a9aab4" />
      <path vectorEffect="non-scaling-stroke" d="M1120 248L1132 244L1358 378L1343 376Z" fill="#a9aab4" />
      <path vectorEffect="non-scaling-stroke" d="M940 233L1028 180L1043 183L1067 277L1045 297Z" fill="#9091a0" />
      <path vectorEffect="non-scaling-stroke" d="M968 247L1022 214L1040 287Z" fill="#a0a1ac" />
      <path vectorEffect="non-scaling-stroke" d="M205 483L395 622L375 760L472 840L505 705L716 862L610 1365L120 955Z" fill="#72727c" />
      <path vectorEffect="non-scaling-stroke" d="M245 412L433 552Q410 570 405 590L395 622L205 483Q212 435 245 412Z" fill="url(#bandA)" />
      <path vectorEffect="non-scaling-stroke" d="M545 632L752 790Q735 815 716 862L505 705Q515 655 545 632Z" fill="url(#bandA)" />
      <path vectorEffect="non-scaling-stroke" d="M527 500L433 552Q412 570 405 590L375 760L472 840L470 815L395 755L425 605Q428 592 440 585L527 530Z" fill="#8d8e9b" />
      <path vectorEffect="non-scaling-stroke" d="M527 500L628 574L605 590L527 530Z" fill="#6d6e7a" />
      <path vectorEffect="non-scaling-stroke" d="M820 62L245 412L433 552L527 500L628 574L545 632L752 790L1343 376L1125 246L1045 297L940 233L1028 180Z" fill="#9496a2" />
      {/* near foot with its two tabs, side first */}
      <path vectorEffect="non-scaling-stroke" d="M20 1042L20 1075L85 1140L85 1107Z" fill="#747582" />
      <path vectorEffect="non-scaling-stroke" transform="translate(0 33)" d="M105 985L20 1042L85 1107Q60 1130 65 1150Q85 1190 120 1190Q155 1190 175 1182L325 1320Q298 1345 303 1365Q325 1410 365 1410Q400 1410 420 1400L505 1470L590 1395Z" fill="#747582" />
      <ellipse vectorEffect="non-scaling-stroke" cx="120" cy="1183" rx="55" ry="40" fill="url(#tabSide)" />
      <ellipse vectorEffect="non-scaling-stroke" cx="362" cy="1403" rx="58" ry="42" fill="url(#tabSide)" />
      <path vectorEffect="non-scaling-stroke" d="M105 985L20 1042L85 1107Q60 1130 65 1150Q85 1190 120 1190Q155 1190 175 1182L325 1320Q298 1345 303 1365Q325 1410 365 1410Q400 1410 420 1400L505 1470L590 1395Z" fill="#9798a4" />
      <path vectorEffect="non-scaling-stroke" d="M120 955L610 1365L590 1400L105 985Z" fill="url(#bandB)" />
      <ellipse vectorEffect="non-scaling-stroke" cx="131" cy="1142" rx="37" ry="30" fill="#6f707c" />
      <path vectorEffect="non-scaling-stroke" d="M100 1155Q130 1135 163 1155Q150 1172 131 1172Q112 1172 100 1155Z" fill="#a5a6b0" />
      <ellipse vectorEffect="non-scaling-stroke" cx="373" cy="1358" rx="40" ry="32" fill="#6f707c" />
      <path vectorEffect="non-scaling-stroke" d="M340 1372Q373 1350 408 1372Q394 1390 373 1390Q352 1390 340 1372Z" fill="#a5a6b0" />
      {/* sheet edge running round the section */}
      <path vectorEffect="non-scaling-stroke" d="M752 790L1343 376Q1355 376 1358 388L1420 700Q1428 730 1445 718L1507 675L1507 705L1440 755Q1425 765 1413 745L1345 425Q1340 405 1325 412L760 825Q740 835 735 855L630 1370Q620 1410 590 1430L505 1502L505 1470L590 1395Q605 1385 610 1365L716 862Q725 820 752 790Z" fill="#8e8f9c" />
    </g>
    {/* axis triad */}
    <g>
      <path d="M391 931l-3 9h6z" fill="#3a3ad0" />
      <rect x="389" y="939" width="4" height="8" fill="#4d4dc0" />
      <path d="M376 940l11 4-3 6z" fill="#1f7a2a" />
      <path d="M384 944l6 4-4 2z" fill="#3cc24a" />
      <path d="M405 941l-11 3 3 6z" fill="#8a2020" />
      <path d="M397 945l-6 4 4 1z" fill="#d84040" />
      <rect x="388" y="947" width="5" height="4" fill="#f4f4f4" />
      <text x="388" y="928" fontSize="10" fill="#1818e0" fontFamily="Liberation Sans">Z</text>
      <text x="408" y="940" fontSize="10" fill="#e01818" fontFamily="Liberation Sans">X</text>
      <text x="369" y="940" fontSize="10" fill="#18c018" fontFamily="Liberation Sans">Y</text>
    </g>
  </ViewSvg>
);

export default function App() {
  return (
    <Page>
      <GlobalStyle />
      <TitleBar>
        <Qat>
          <QatSlot $w={18}><Icon name="logo" size={18} /></QatSlot>
          {qat.map((n, i) => (
            <QatSlot key={i} $ml={i === 0 ? 7 : 0} $on={n === "sparkTree" || n === "film"}>
              <Icon name={n} size={18} />
            </QatSlot>
          ))}
          <QatSlot $w={14}><Caret $c="#fff" $ml={0} /></QatSlot>
        </Qat>
        <Title>IRONCAD 2019 (NFR) - [lesson 17model*]</Title>
        <WinButtons>
          <WinGlyph viewBox="0 0 12 12"><path d="M3 9h6" stroke="#fff" strokeWidth="2" /></WinGlyph>
          <WinGlyph viewBox="0 0 12 12"><path d="M4 4V1h7v7H8M1 4h7v7H1z" stroke="#fff" strokeWidth="1.6" fill="none" /></WinGlyph>
          <WinGlyph viewBox="0 0 12 12"><path d="M2 2l8 8M10 2l-8 8" stroke="#fff" strokeWidth="1.6" /></WinGlyph>
        </WinButtons>
      </TitleBar>
      <TabBar>
        <MenuTab>Menu</MenuTab>
        {tabs.map(([t, pad]) => (
          <Tab key={t} $active={t === "Feature"} $pad={pad}>{t}</Tab>
        ))}
        <TabRight>
          <span>Styles</span>
          <Caret $c="#fff" $ml={8} />
          <HelpSlot><Icon name="help" /></HelpSlot>
          <Caret $c="#fff" $ml={8} />
          <WinGlyph viewBox="0 0 12 12" $ml={6}><path d="M3 9h6" stroke="#fff" strokeWidth="2" /></WinGlyph>
          <WinGlyph viewBox="0 0 12 12" $ml={8}><path d="M4 4V1h7v7H8M1 4h7v7H1z" stroke="#fff" strokeWidth="1.6" fill="none" /></WinGlyph>
          <WinGlyph viewBox="0 0 12 12" $ml={6}><path d="M2 2l8 8M10 2l-8 8" stroke="#fff" strokeWidth="1.6" /></WinGlyph>
        </TabRight>
      </TabBar>
      <Ribbon>
        <Group $w={298}>
          <GroupBody $pl={8}>
            <LargeBtn w={48} icon="extrude" lines={["Extrude", <>Wizard<Caret /></>]} />
            <LargeBtn w={50} icon="spin" lines={["Spin", <>Wizard<Caret /></>]} />
            <LargeBtn w={48} icon="sweep" lines={[<><Key>S</Key>weep</>, <Caret $ml={0} />]} />
            <LargeBtn w={46} icon="loft" lines={[<><Key>L</Key>oft</>, <Caret $ml={0} />]} />
            <SmallCol>
              <Small icon="thread">Thread</Small>
              <Small icon="thicken">Thicken</Small>
              <Small icon="hole">Custom Hole</Small>
            </SmallCol>
          </GroupBody>
          <GroupLabel>Feature</GroupLabel>
        </Group>
        <Group $w={105}>
          <GroupBody>
            <LargeBtn w={105} icon="quick" lines={["Quick", <>Block<Caret /></>]} />
          </GroupBody>
          <GroupLabel>Quick Pick Shapes</GroupLabel>
        </Group>
        <Group $w={407}>
          <GroupBody $pl={4}>
            <LargeBtn w={47} icon="blend" lines={[<><Key>B</Key>lend</>, "Edges"]} />
            <LargeBtn w={47} icon="chamfer" lines={[<><Key>C</Key>hamfer</>, "Edges"]} />
            <SmallCol $w={84} $ml={5}>
              <Small icon="draft">D<Key>r</Key>aft Faces</Small>
              <Small icon="shell"><Key>S</Key>hell Part</Small>
              <Small icon="boolean">Boolean</Small>
            </SmallCol>
            <SmallCol $w={143}>
              <Small icon="split">Split</Small>
              <Small icon="stretch" off>Stretch Part/Assembly</Small>
              <Small icon="deletebody" off>Delete Body</Small>
            </SmallCol>
            <SmallCol>
              <Small icon="rib">Rib</Small>
              <Small icon="trim"><Key>T</Key>rim</Small>
              <Small icon="emboss"><Key>E</Key>mboss<Caret $ml={6} /></Small>
            </SmallCol>
          </GroupBody>
          <GroupLabel>Modify</GroupLabel>
        </Group>
        <Group $w={165}>
          <GroupBody $pl={3}>
            <LargeBtn w={50} icon="pattern" lines={["Pattern", "Feature"]} />
            <SmallCol>
              <Small icon="scale">Scale Body</Small>
              <Small icon="copy" off>Copy Body</Small>
              <Small icon="mirror"><Key>M</Key>irror Feature<Caret $ml={6} /></Small>
            </SmallCol>
          </GroupBody>
          <GroupLabel>Transform</GroupLabel>
        </Group>
        <Group $w={208}>
          <GroupBody $pl={9}>
            <SmallCol $w={87}>
              <Small icon="move">Mo<Key>v</Key>e Face</Small>
              <Small icon="match"><Key>M</Key>atch Face</Small>
              <Small icon="offset"><Key>O</Key>ffset Face</Small>
            </SmallCol>
            <SmallCol>
              <Small icon="deleteface"><Key>D</Key>elete Face</Small>
              <Small icon="radius" off>Edit Face Radius</Small>
              <Small icon="splitfaces">Split <Key>F</Key>aces</Small>
            </SmallCol>
          </GroupBody>
          <GroupLabel>Direct Edit</GroupLabel>
        </Group>
        <Group $w={352}>
          <GroupBody $pl={7}>
            <LargeBtn w={41} icon="datum" lines={["Datum", <>Plane<Caret /></>]} />
            <LargeBtn w={46} icon="create" lines={["Create", <><Key>P</Key>art</>]} />
            <LargeBtn w={54} icon="link" off lines={["Link Body", "As Part"]} />
            <LargeBtn w={69} icon="unlink" off lines={[<>Unlink <Key>B</Key>ody</>, "Association"]} />
            <LargeBtn w={62} icon="steel" off lines={["Insert Steel", "Frame"]} />
            <LargeBtn w={68} icon="trimsteel" off lines={["Trim/Extend", "Steel Frame"]} />
          </GroupBody>
          <GroupLabel>Structured Part Operations</GroupLabel>
        </Group>
      </Ribbon>
      <ToolRow>
        <ToolBar>
          <Grip />
          <ToolSlot $w={22}><Icon name="cursorA" size={18} /></ToolSlot>
          <ToolSlot $w={20} $on><Icon name="cursor" size={18} /></ToolSlot>
          <ToolSlot $w={22}><Icon name="cursorBox" size={18} /></ToolSlot>
          <Combo $w={146} $off $ml={3}>Default<Caret $c="#bbb" /></Combo>
          <Combo $w={146} $ml={4}>Any<Caret $c="#777" /></Combo>
          <Combo $w={146} $ml={4}>Default<Caret $c="#777" /></Combo>
          <ToolSlot $w={28}><Icon name="hier" size={18} /></ToolSlot>
        </ToolBar>
      </ToolRow>
      <DocStrip>
        <DocTab>
          lesson 17model*
          <svg width="9" height="9" viewBox="0 0 9 9"><path d="M1 1l7 7M8 1L1 8" stroke="#555" strokeWidth="1.1" /></svg>
        </DocTab>
        <Chevron />
      </DocStrip>
      <Main>
        <LeftBar>
          {leftBar.map(([k, v, h], i) =>
            k === "i" ? (
              <LeftItem key={i}><Icon name={v} size={18} /></LeftItem>
            ) : (
              <LeftGap key={i} $kind={v} $h={h} $left={v === "arrow"} />
            )
          )}
        </LeftBar>
        <Scene>
          <SceneHead>
            Scene
            <SceneHeadTools>
              <Caret $c="#666" $s={5} />
              <svg width="10" height="11" viewBox="0 0 10 11"><path d="M3 1h4v5H3zM1 6h8M5 6v4" stroke="#666" strokeWidth="1.2" fill="none" /></svg>
              <svg width="9" height="9" viewBox="0 0 9 9"><path d="M1 1l7 7M8 1L1 8" stroke="#666" strokeWidth="1.2" /></svg>
            </SceneHeadTools>
          </SceneHead>
          <SearchRow>
            <SearchText>Search ...</SearchText>
            <SearchTools>
              <Icon name="redX" size={18} />
              <Icon name="sparkTree" size={18} />
            </SearchTools>
          </SearchRow>
          <TreeBox>
            <TreeBody>
              <TreeRow $ml={4}>
                <Icon name="root" size={17} />
                <TreeText>C:\Users\jeter\Documents\Data\2018\Word\TECH-NET\</TreeText>
              </TreeRow>
              <Branch $ml={12}>
                <NodeRow icon="axes" text="Global Coordinate System" />
                <NodeRow icon="part" text="Part2" open />
                <Branch $ml={18}>
                  {features.map(([icon, text, exp], i) => (
                    <NodeRow key={i} icon={icon} text={text} leaf={!exp} />
                  ))}
                </Branch>
                <NodeRow icon="camera" text="Cameras" />
                <NodeRow icon="light" text="Lights" />
              </Branch>
            </TreeBody>
            <HScroll>
              <ScrollBtn />
              <ScrollThumb />
              <ScrollTrack />
              <ScrollBtn $right />
            </HScroll>
          </TreeBox>
          <SceneTabs>
            <SceneTab $w={59} $active><Icon name="sparkTree" />Scene</SceneTab>
            <SceneTab $w={65}><Icon name="magnify" />Search</SceneTab>
            <SceneTab $w={80}><Icon name="props" />Properties</SceneTab>
          </SceneTabs>
        </Scene>
        <Viewport>
          <Bracket />
        </Viewport>
      </Main>
      <CatalogRow>
        <CatalogTab><Icon name="catalog" />Catalog Browser</CatalogTab>
        <CatalogLine />
      </CatalogRow>
      <Status>
        For Help, press F1
        <StatusInfo $ml="auto" $ls={-0.22}>View size: 1568 x  780</StatusInfo>
        <StatusInfo $ml="28px">Units: mm, deg</StatusInfo>
        <StatusIcons>
          {statusItems.map(([k, n, w], i) =>
            k === "c" ? (
              <StatusSlot key={i} $w={w}><Caret $ml={0} $c="#555" /></StatusSlot>
            ) : (
              <StatusSlot key={i} $w={w} $on={k === "on"}><Icon name={n} size={18} /></StatusSlot>
            )
          )}
          <Combo $w={87} $h={22} $ml={2}>Any<Caret $c="#777" /></Combo>
          <Combo $w={66} $h={22} $ml={1}>Default<Caret $c="#777" /></Combo>
          <StatusSlot $w={24}><Icon name="hierY" size={18} /></StatusSlot>
        </StatusIcons>
      </Status>
      <Edge><EdgeLight /></Edge>
    </Page>
  );
}
